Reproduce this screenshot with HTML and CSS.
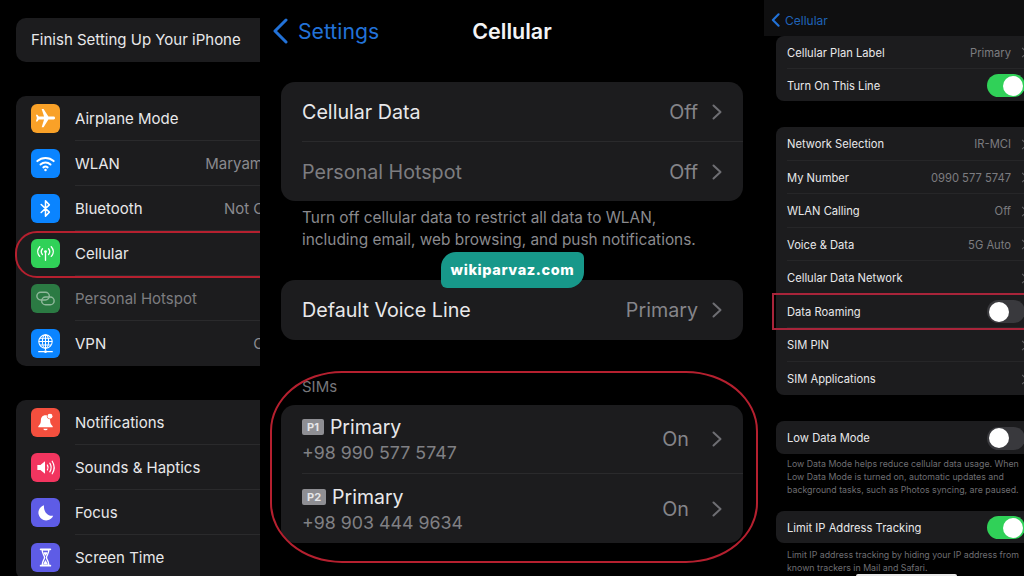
FILE: index.html
```html
<!DOCTYPE html>
<html lang="en">
<head>
    <meta charset="UTF-8">
    <meta name="viewport" content="width=device-width, initial-scale=1.0">
    <title>Cellular settings</title>
    <link rel="stylesheet" href="styles.css">
</head>
<body>

<div class="screens">

    <!-- Settings list -->
    <section class="pane pane-left">
        <div class="list-card setup-card">Finish Setting Up Your iPhone</div>

        <div class="list-card main-group">
            <div class="main-row">
                <span class="app-icon icon-orange">
                    <svg viewBox="0 0 24 24"><path fill="#fff" transform="rotate(90 12 12)" d="M21 16v-2l-8-5V3.500c0-.83-.67-1.500-1.500-1.500S10 2.670 10 3.500V9l-8 5v2l8-2.500V19l-2 1.500V22l3.500-1 3.500 1v-1.500L13 19v-5.500l8 2.500z"/></svg>
                </span>
                <span class="main-label">Airplane Mode</span>
            </div>
            <div class="main-row">
                <span class="app-icon icon-blue">
                    <svg viewBox="0 0 24 24" fill="none" stroke="#fff" stroke-width="2.100" stroke-linecap="round"><path d="M3.500 9.500c4.800-4.400 12.200-4.400 17 0"/><path d="M6.800 13c3-2.700 7.400-2.700 10.400 0"/><path d="M9.800 16c1.300-1 3.100-1 4.400 0"/><circle cx="12" cy="18.700" r="1.300" fill="#fff" stroke="none"/></svg>
                </span>
                <span class="main-label">WLAN</span>
                <span class="main-value value-wlan">Maryam</span>
            </div>
            <div class="main-row">
                <span class="app-icon icon-blue">
                    <svg viewBox="0 0 24 24" fill="none" stroke="#fff" stroke-width="1.600" stroke-linejoin="round" stroke-linecap="round"><path d="M7.500 7.800 16 15.800 12 20V4l4 4.200-8.500 8"/></svg>
                </span>
                <span class="main-label">Bluetooth</span>
                <span class="main-value">Not Connected</span>
            </div>
            <div class="main-row">
                <span class="app-icon icon-green">
                    <svg viewBox="0 0 24 24" fill="none" stroke="#fff" stroke-width="1.400" stroke-linecap="round"><circle cx="12" cy="10" r="1.500" fill="#fff" stroke="none"/><path d="M12 11v8"/><path d="M8.800 7c-1.500 1.800-1.500 4.200 0 6"/><path d="M15.200 7c1.500 1.800 1.500 4.200 0 6"/><path d="M6 5c-2.800 3-2.800 7 0 10"/><path d="M18 5c2.800 3 2.800 7 0 10"/></svg>
                </span>
                <span class="main-label">Cellular</span>
            </div>
            <div class="main-row row-dim">
                <span class="app-icon icon-green-dim">
                    <svg viewBox="0 0 24 24" fill="none" stroke="#8fb89b" stroke-width="1.500"><rect x="3" y="5.500" width="13" height="8" rx="4"/><rect x="8" y="10.500" width="13" height="8" rx="4"/></svg>
                </span>
                <span class="main-label">Personal Hotspot</span>
            </div>
            <div class="main-row">
                <span class="app-icon icon-blue">
                    <svg viewBox="0 0 24 24" fill="none" stroke="#fff" stroke-width="1.100"><circle cx="12" cy="10" r="7"/><ellipse cx="12" cy="10" rx="3.200" ry="7"/><path d="M5 10h14M6 6.500h12M6 13.500h12M12 3v16"/><path d="M5 20.500h14" stroke-width="1.500" stroke-linecap="round"/><circle cx="12" cy="20.500" r="1.400" fill="#fff" stroke="none"/></svg>
                </span>
                <span class="main-label">VPN</span>
                <span class="main-value">Connected</span>
            </div>
        </div>

        <div class="list-card main-group">
            <div class="main-row">
                <span class="app-icon icon-red">
                    <svg viewBox="0 0 24 24"><path fill="#fff" d="M12 4.500c-3.200 0-4.800 2.400-4.800 5.200 0 3-1 4.600-2.700 6.300v1h15v-1c-1.700-1.700-2.700-3.300-2.700-6.300 0-.4 0-.8-.1-1.200-2.300.2-3.900-2-3.200-4-.5 0-1 0-1.500 0z"/><path fill="#fff" d="M9.800 18.500h4.400a2.200 1.700 0 0 1-4.400 0z"/><circle cx="16.700" cy="5.500" r="2.600" fill="#fff"/></svg>
                </span>
                <span class="main-label">Notifications</span>
            </div>
            <div class="main-row">
                <span class="app-icon icon-pink">
                    <svg viewBox="0 0 24 24" fill="none" stroke="#fff" stroke-width="1.300" stroke-linecap="round"><path fill="#fff" stroke="none" d="M3.500 9.500h3.200L11.500 5.500v13l-4.800-4H3.500z"/><path d="M14 9.500c.9 1.500.9 3.500 0 5"/><path d="M16.500 7.500c1.700 2.700 1.700 6.300 0 9"/><path d="M19 5.500c2.500 3.900 2.500 9.100 0 13"/></svg>
                </span>
                <span class="main-label">Sounds &amp; Haptics</span>
            </div>
            <div class="main-row">
                <span class="app-icon icon-indigo">
                    <svg viewBox="0 0 24 24"><path fill="#fff" d="M10.500 4.500a8 8 0 1 0 9.500 10.800c-5.500 1.200-10.500-4.500-9.500-10.800z"/></svg>
                </span>
                <span class="main-label">Focus</span>
            </div>
            <div class="main-row">
                <span class="app-icon icon-indigo">
                    <svg viewBox="0 0 24 24" fill="none" stroke="#fff" stroke-linecap="round"><path d="M7 3.500h10M7 20.500h10" stroke-width="2"/><path d="M8.500 4c0 4.500 2.500 5.500 2.500 8s-2.500 3.500-2.500 8h7c0-4.500-2.500-5.500-2.500-8s2.500-3.500 2.500-8z" stroke-width="1.400"/><path fill="#fff" stroke="none" d="M10 6.500h4c-.3 1.800-1.300 2.700-2 3.800-.7-1.100-1.700-2-2-3.800zM12 14.500l2.500 4.500h-5z"/></svg>
                </span>
                <span class="main-label">Screen Time</span>
            </div>
        </div>

        <div class="mark-oval oval-cellular"></div>
    </section>

    <!-- Cellular page -->
    <section class="pane pane-middle">
        <header class="nav-bar">
            <span class="nav-back">
                <svg class="nav-chevron" viewBox="0 0 16 26" fill="none" stroke="#2272d8" stroke-width="3" stroke-linecap="round" stroke-linejoin="round"><path d="M14 2 3 13l11 11"/></svg>
                Settings
            </span>
            <span class="nav-title">Cellular</span>
        </header>

        <div class="list-card big-card">
            <div class="big-row">
                <span class="big-label">Cellular Data</span>
                <span class="big-value">Off</span>
                <svg class="big-chevron" viewBox="0 0 10 16" fill="none" stroke="#6e6e73" stroke-width="2" stroke-linecap="round" stroke-linejoin="round"><path d="m1.500 1.500 7 6.500-7 6.500"/></svg>
            </div>
            <div class="big-row">
                <span class="big-label label-dim">Personal Hotspot</span>
                <span class="big-value">Off</span>
                <svg class="big-chevron" viewBox="0 0 10 16" fill="none" stroke="#6e6e73" stroke-width="2" stroke-linecap="round" stroke-linejoin="round"><path d="m1.500 1.500 7 6.500-7 6.500"/></svg>
            </div>
        </div>
        <p class="big-note">Turn off cellular data to restrict all data to WLAN,<br>including email, web browsing, and push notifications.</p>

        <div class="list-card big-card voice-card">
            <div class="big-row">
                <span class="big-label">Default Voice Line</span>
                <span class="big-value">Primary</span>
                <svg class="big-chevron" viewBox="0 0 10 16" fill="none" stroke="#6e6e73" stroke-width="2" stroke-linecap="round" stroke-linejoin="round"><path d="m1.500 1.500 7 6.500-7 6.500"/></svg>
            </div>
        </div>

        <div class="sims-title">SIMs</div>
        <div class="list-card big-card">
            <div class="big-row sim-row">
                <div class="sim-text">
                    <div class="sim-name"><span class="sim-badge">P1</span>Primary</div>
                    <div class="sim-number">+98 990 577 5747</div>
                </div>
                <span class="big-value sim-value">On</span>
                <svg class="big-chevron" viewBox="0 0 10 16" fill="none" stroke="#6e6e73" stroke-width="2" stroke-linecap="round" stroke-linejoin="round"><path d="m1.500 1.500 7 6.500-7 6.500"/></svg>
            </div>
            <div class="big-row sim-row">
                <div class="sim-text">
                    <div class="sim-name"><span class="sim-badge">P2</span>Primary</div>
                    <div class="sim-number">+98 903 444 9634</div>
                </div>
                <span class="big-value sim-value">On</span>
                <svg class="big-chevron" viewBox="0 0 10 16" fill="none" stroke="#6e6e73" stroke-width="2" stroke-linecap="round" stroke-linejoin="round"><path d="m1.500 1.500 7 6.500-7 6.500"/></svg>
            </div>
        </div>

        <div class="mark-oval oval-sims"></div>
        <div class="watermark">wikiparvaz.com</div>
    </section>

    <!-- SIM details -->
    <section class="pane pane-right">
        <header class="small-nav">
            <svg class="small-chevron" viewBox="0 0 10 16" fill="none" stroke="#2272d8" stroke-width="2.400" stroke-linecap="round" stroke-linejoin="round"><path d="M8.500 1.500 2 8l6.500 6.500"/></svg>
            Cellular
        </header>

        <div class="list-card small-card">
            <div class="small-row">
                <span class="small-label">Cellular Plan Label</span>
                <span class="small-value">Primary</span>
                <span class="small-arrow"></span>
            </div>
            <div class="small-row">
                <span class="small-label">Turn On This Line</span>
                <span class="switch switch-on"></span>
            </div>
        </div>

        <div class="list-card small-card second-card">
            <div class="small-row tall-row">
                <span class="small-label">Network Selection</span>
                <span class="small-value">IR-MCI</span>
                <span class="small-arrow"></span>
            </div>
            <div class="small-row tall-row">
                <span class="small-label">My Number</span>
                <span class="small-value">0990 577 5747</span>
                <span class="small-arrow"></span>
            </div>
            <div class="small-row tall-row">
                <span class="small-label">WLAN Calling</span>
                <span class="small-value">Off</span>
                <span class="small-arrow"></span>
            </div>
            <div class="small-row tall-row">
                <span class="small-label">Voice &amp; Data</span>
                <span class="small-value">5G Auto</span>
                <span class="small-arrow"></span>
            </div>
            <div class="small-row tall-row">
                <span class="small-label">Cellular Data Network</span>
                <span class="small-arrow"></span>
            </div>
            <div class="small-row tall-row">
                <span class="small-label">Data Roaming</span>
                <span class="switch"></span>
            </div>
            <div class="small-row tall-row">
                <span class="small-label">SIM PIN</span>
                <span class="small-arrow"></span>
            </div>
            <div class="small-row tall-row">
                <span class="small-label">SIM Applications</span>
                <span class="small-arrow"></span>
            </div>
        </div>

        <div class="list-card small-card second-card">
            <div class="small-row">
                <span class="small-label">Low Data Mode</span>
                <span class="switch"></span>
            </div>
        </div>
        <p class="small-note">Low Data Mode helps reduce cellular data usage. When<br>Low Data Mode is turned on, automatic updates and<br>background tasks, such as Photos syncing, are paused.</p>

        <div class="list-card small-card tracking-card">
            <div class="small-row">
                <span class="small-label">Limit IP Address Tracking</span>
                <span class="switch switch-on"></span>
            </div>
        </div>
        <p class="small-note note-last">Limit IP address tracking by hiding your IP address from<br>known trackers in Mail and Safari.</p>

        <div class="roaming-box"></div>
        <div class="home-bar"></div>
    </section>

</div>

</body>
</html>
```

FILE: styles.css
```css
html, body {
    margin: 0;
    height: 100%;
    background-color: #000;
}

body {
    font-family: Inter, "Liberation Sans", sans-serif;
    color: #e8e8ea;
    overflow: hidden;
}

.screens {
    display: flex;
    width: 1024px;
    height: 576px;
}

.pane {
    position: relative;
    overflow: hidden;
    flex: none;
    height: 576px;
}

.list-card {
    background-color: #1c1c1e;
}

/* Left pane */
.pane-left {
    width: 260px;
    padding-top: 18px;
    box-sizing: border-box;
}

.setup-card {
    width: 320px;
    height: 44px;
    margin-left: 16px;
    padding-left: 15px;
    box-sizing: border-box;
    border-radius: 10px;
    font-size: 15px;
    line-height: 44px;
}

.main-group {
    width: 315px;
    margin: 34px 0 0 16px;
    border-radius: 10px;
}

.main-row {
    display: flex;
    align-items: center;
    height: 45px;
    padding-left: 15px;
    box-sizing: border-box;
}

.app-icon {
    display: flex;
    flex: none;
    align-items: center;
    justify-content: center;
    width: 29px;
    height: 29px;
    margin-right: 15px;
    border-radius: 6px;
}

.app-icon svg {
    width: 23px;
    height: 23px;
}

.icon-orange { background-color: #f9a128; }
.icon-blue { background-color: #0a84ff; }
.icon-green { background-color: #30d158; }
.icon-green-dim { background-color: #2b7a43; }
.icon-red { background-color: #f44f3e; }
.icon-pink { background-color: #f2355f; }
.icon-indigo { background-color: #5e5ce6; }

.main-label {
    flex: 1;
    height: 45px;
    border-bottom: 1px solid #2a2a2c;
    box-sizing: border-box;
    font-size: 15px;
    line-height: 45px;
    white-space: nowrap;
}

.main-row:last-child .main-label {
    border-bottom: none;
}

.row-dim .main-label {
    color: #7d7d80;
}

.main-value {
    height: 45px;
    border-bottom: 1px solid #2a2a2c;
    box-sizing: border-box;
    color: #8a8a8e;
    font-size: 15px;
    line-height: 45px;
    white-space: nowrap;
}

.main-row:last-child .main-value {
    border-bottom: none;
}

.value-wlan {
    padding-right: 68px;
}

/* Red marks drawn on the screenshot */
.mark-oval {
    position: absolute;
    border: 2px solid #b5202f;
    box-sizing: border-box;
}

.oval-cellular {
    top: 231px;
    left: 15px;
    width: 300px;
    height: 47px;
    border-radius: 22px;
}

.oval-sims {
    top: 371px;
    left: 10px;
    width: 488px;
    height: 192px;
    border-radius: 72px / 60px;
}

/* Middle pane */
.pane-middle {
    width: 504px;
}

.nav-bar {
    position: relative;
    display: flex;
    align-items: center;
    justify-content: center;
    height: 62px;
    margin-bottom: 20px;
}

.nav-back {
    position: absolute;
    left: 12px;
    top: 17px;
    display: flex;
    align-items: center;
    gap: 10px;
    color: #2272d8;
    font-size: 21.2px;
    line-height: 28px;
}

.nav-chevron {
    width: 16px;
    height: 26px;
}

.nav-title {
    color: #f4f4f6;
    font-size: 21.5px;
    font-weight: 600;
}

.big-card {
    width: 462px;
    margin-left: 21px;
    border-radius: 14px;
}

.big-row {
    display: flex;
    align-items: center;
    height: 59.5px;
    margin-left: 21px;
    padding: 1px 21px 0 0;
    border-bottom: 1px solid #2a2a2c;
    box-sizing: border-box;
}

.big-row:last-child {
    border-bottom: none;
}

.big-label {
    flex: 1;
    font-size: 19.7px;
}

.label-dim {
    color: #7d7d80;
}

.big-value {
    color: #85858a;
    font-size: 19.7px;
}

.big-chevron {
    width: 10px;
    height: 16px;
    margin-left: 14px;
}

.big-note {
    margin: 6px 0 0 42px;
    color: #8a8a8e;
    font-size: 15.4px;
    line-height: 22px;
    white-space: nowrap;
}

.voice-card {
    margin-top: 29px;
}

.sims-title {
    margin: 39px 0 10px 42px;
    color: #77777b;
    font-size: 15px;
    line-height: 16px;
}

.sim-row {
    height: 69px;
}

.sim-text {
    flex: 1;
    padding-top: 1px;
}

.sim-name {
    display: flex;
    align-items: center;
    font-size: 19.5px;
    line-height: 26px;
}

.sim-badge {
    margin-right: 6px;
    padding: 0 5px;
    border-radius: 2px;
    background-color: #8e8e93;
    color: #e6e6e8;
    font-size: 11px;
    font-weight: 700;
    line-height: 16px;
}

.sim-number {
    color: #808084;
    font-size: 17.8px;
    line-height: 25px;
}

.sim-value {
    margin-right: 9px;
}

.watermark {
    position: absolute;
    top: 252px;
    left: 181px;
    width: 143px;
    height: 36px;
    border-radius: 15px 6px 16px 6px;
    background-color: #17988a;
    color: #fff;
    font-size: 14.5px;
    font-weight: 800;
    letter-spacing: 0.6px;
    line-height: 35px;
    text-align: center;
}

/* Right pane */
.pane-right {
    width: 260px;
}

.small-nav {
    display: flex;
    align-items: center;
    gap: 5px;
    height: 36px;
    padding: 4px 0 0 7px;
    box-sizing: border-box;
    background-color: #0f0f10;
    color: #1f63b8;
    font-size: 12px;
}

.small-chevron {
    width: 9px;
    height: 14px;
}

.small-card {
    width: 260px;
    margin-left: 12px;
    border-radius: 8px;
}

.second-card {
    margin-top: 26px;
}

.tracking-card {
    margin-top: 15px;
}

.small-row {
    display: flex;
    align-items: center;
    height: 32.5px;
    margin-left: 11px;
    padding-top: 2px;
    border-bottom: 1px solid #262628;
    box-sizing: border-box;
}

.tall-row {
    height: 33.5px;
}

.small-row:last-child {
    border-bottom: none;
}

.small-label {
    flex: 1;
    font-size: 11.2px;
    white-space: nowrap;
}

.small-value {
    color: #7c7c80;
    font-size: 11.2px;
}

.small-arrow {
    flex: none;
    width: 7px;
    height: 7px;
    margin: 0 10px 0 8px;
    border-top: 1.5px solid #5f5f63;
    border-right: 1.5px solid #5f5f63;
    box-sizing: border-box;
    transform: rotate(45deg);
}

.switch {
    position: relative;
    flex: none;
    width: 38px;
    height: 23px;
    margin-right: 11px;
    border-radius: 12px;
    background-color: #39393d;
}

.switch::after {
    content: "";
    position: absolute;
    top: 1.5px;
    left: 2px;
    width: 20px;
    height: 20px;
    border-radius: 50%;
    background-color: #fff;
}

.switch-on {
    background-color: #30d158;
}

.switch-on::after {
    left: 16px;
}

.small-note {
    margin: 3px 0 0 23px;
    color: #6e6e72;
    font-size: 8.8px;
    line-height: 13px;
    white-space: nowrap;
}

.note-last {
    margin-top: 5px;
}

.roaming-box {
    position: absolute;
    top: 293px;
    left: 8px;
    width: 270px;
    height: 37px;
    border: 2px solid #a8243a;
    box-sizing: border-box;
}

.home-bar {
    position: absolute;
    top: 574px;
    left: 92px;
    width: 101px;
    height: 4px;
    border-radius: 2px;
    background-color: #e8e8e8;
}
```
